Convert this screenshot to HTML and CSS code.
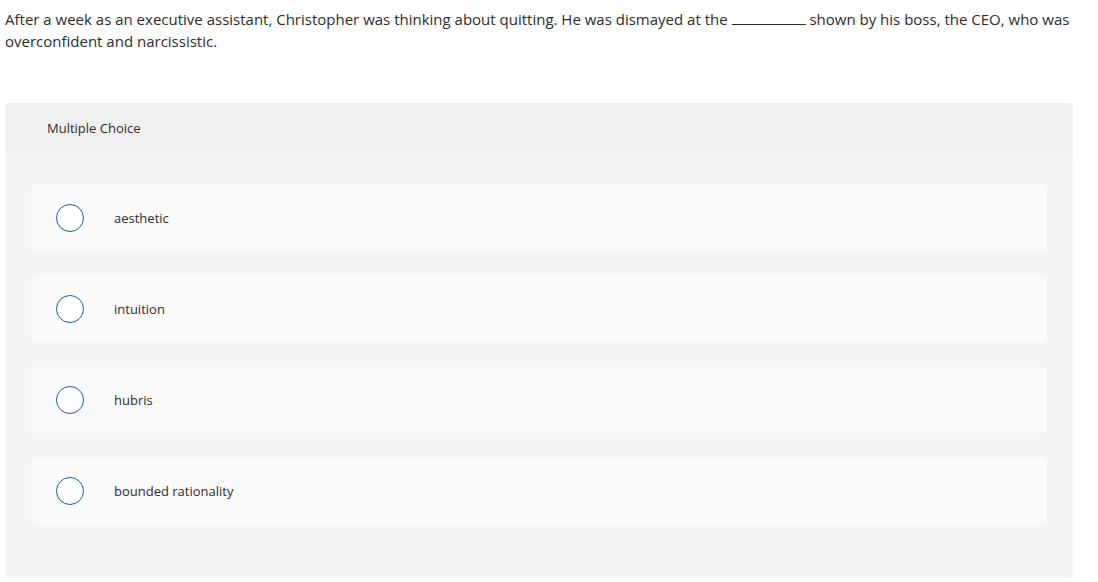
FILE: index.html
```html
<!DOCTYPE html>
<html>
<head>
<meta charset="utf-8">
<link rel="stylesheet" href="styles.css">
</head>
<body>
<div class="page">
  <p class="prompt">After a week as an executive assistant, Christopher was thinking about quitting. He was dismayed at the <span class="blank"></span> shown by his boss, the CEO, who was overconfident and narcissistic.</p>
  <section class="panel">
    <header class="panel-head">Multiple Choice</header>
    <div class="choices">
      <label class="choice"><span class="radio"></span><span class="label">aesthetic</span></label>
      <label class="choice"><span class="radio"></span><span class="label">intuition</span></label>
      <label class="choice"><span class="radio"></span><span class="label">hubris</span></label>
      <label class="choice"><span class="radio"></span><span class="label">bounded rationality</span></label>
    </div>
  </section>
</div>
</body>
</html>
```
FILE: styles.css
```css
html, body {
  margin: 0;
  padding: 0;
  background: #ffffff;
}
body {
  font-family: "Open Sans", "Liberation Sans", sans-serif;
  color: #2d2d2d;
}
.page {
  padding: 8px 25px 0 5px;
}
.prompt {
  margin: 0;
  font-size: 15px;
  line-height: 22px;
  width: 1075px;
}
.blank {
  display: inline-block;
  width: 74px;
  border-bottom: 1px solid #2d2d2d;
  vertical-align: baseline;
}
.panel {
  margin-top: 51px;
  background: #f5f5f5;
  border-radius: 3px;
  height: 475px;
}
.panel-head {
  background: #f0f0f0;
  height: 50px;
  border-radius: 3px 3px 0 0;
  display: flex;
  align-items: center;
  padding-left: 42px;
  font-size: 13px;
}
.choices {
  display: flex;
  flex-direction: column;
  gap: 25px;
  padding: 32px 27px 0 26px;
}
.choice {
  display: flex;
  align-items: center;
  height: 66px;
  background: #fafafa;
  border-radius: 3px;
}
.radio {
  width: 26px;
  height: 26px;
  border: 1px solid #1f5c99;
  border-radius: 50%;
  background: #ffffff;
  margin-left: 25px;
  flex: none;
}
.label {
  margin-left: 30px;
  font-size: 13px;
}
```
